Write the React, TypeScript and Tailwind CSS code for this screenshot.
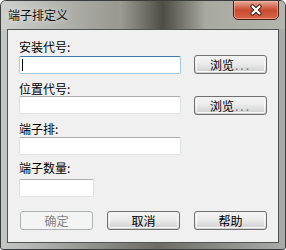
import React from 'react';

const font = { fontFamily: '"Noto Sans CJK SC", "Liberation Sans", sans-serif' };

const TextBox: React.FC<{ width: string; focused?: boolean }> = ({ width, focused }) => (
  <div
    className={`${width} h-[18px] bg-white border rounded-[2px] relative ${
      focused
        ? 'border-[#a4c9e3] border-t-[#3d7bad]'
        : 'border-[#e2e3ea] border-t-[#abadb3] border-l-[#dbdfe6] border-r-[#dbdfe6]'
    }`}
  >
    {focused && <div className="absolute left-[2px] top-[2px] w-px h-[12px] bg-black" />}
  </div>
);

const Button: React.FC<{ label: React.ReactNode; disabled?: boolean }> = ({ label, disabled }) =>
  disabled ? (
    <div className="w-[73px] h-[19px] rounded-[3px] border border-[#adb2b5] bg-[#f4f4f4] flex items-center justify-center text-[12px] leading-[14px] text-[#838383]">
      {label}
    </div>
  ) : (
    <div className="w-[73px] h-[19px] rounded-[3px] border border-[#707070] p-px bg-gradient-to-b from-[#f2f2f2] via-[#ebebeb] via-50% to-[#cfcfcf]">
      <div className="w-full h-full rounded-[2px] border border-white/70 bg-gradient-to-b from-[#f2f2f2] from-0% via-[#ebebeb] via-45% to-[#d3d3d3] flex items-center justify-center text-[12px] leading-[14px] text-black">
        {label}
      </div>
    </div>
  );

const Browse = () => (
  <span>
    浏览<span className="text-[#7a7a7a] tracking-[2px] ml-[1px]">...</span>
  </span>
);

export default function App() {
  return (
    <div
      className="w-[286px] h-[250px] rounded-t-[6px] rounded-b-[3px] border border-[#3a3d3e] bg-gradient-to-r from-[#c5c9c6] from-0% via-[#6c6c64] via-55% to-[#a9ada9] flex flex-col overflow-hidden"
      style={font}
    >
      {/* title bar */}
      <div className="h-[28px] flex items-start shrink-0 bg-gradient-to-r from-[#cdd0cc] from-0% via-[#9a9a92] via-40% to-[#b4b6ae] relative">
        <div className="absolute inset-0 bg-gradient-to-r from-transparent from-42% via-[#3e3e36]/85 via-57% to-transparent to-72%" />
        <div className="relative ml-[7px] mt-[6px] text-[12px] leading-[16px] text-[#111] [text-shadow:0_0_6px_rgba(255,255,255,0.9)]">
          端子排定义
        </div>
        <div className="relative ml-auto mr-[6px] -mt-px w-[46px] h-[20px] rounded-b-[5px] border border-[#4a1b12] bg-gradient-to-b from-[#e7a896] via-[#c84a30] via-50% to-[#d8674a] flex items-center justify-center shadow-[inset_0_0_0_1px_rgba(255,200,180,0.5)]">
          <svg width="14" height="12" viewBox="0 0 14 12">
            <path d="M3.5 2.5 L10.5 9.5 M10.5 2.5 L3.5 9.5" stroke="#3a1a10" strokeWidth="4.2" strokeLinecap="round" />
            <path d="M3.5 2.5 L10.5 9.5 M10.5 2.5 L3.5 9.5" stroke="#ffffff" strokeWidth="2.4" strokeLinecap="round" />
          </svg>
        </div>
      </div>

      {/* client area */}
      <div className="mx-[6px] h-[214px] border border-[#4f5556] bg-[#f0f0f0] shrink-0 flex flex-col pl-[11px] pt-[10px] text-[12px] leading-[14px] text-black">
        <div>安装代号:</div>
        <div className="mt-[1px] flex items-end gap-[13px]">
          <TextBox width="w-[162px]" focused />
          <Button label={<Browse />} />
        </div>

        <div className="mt-[8px]">位置代号:</div>
        <div className="flex items-start gap-[13px]">
          <TextBox width="w-[162px]" />
          <Button label={<Browse />} />
        </div>

        <div className="mt-[7px]">端子排:</div>
        <div className="mt-[1px]">
          <TextBox width="w-[162px]" />
        </div>

        <div className="mt-[6px]">端子数量:</div>
        <div className="mt-[4px]">
          <TextBox width="w-[75px]" />
        </div>

        <div className="mt-[14px] ml-px flex gap-[14px]">
          <Button label="确定" disabled />
          <Button label="取消" />
          <Button label="帮助" />
        </div>
      </div>
    </div>
  );
}
